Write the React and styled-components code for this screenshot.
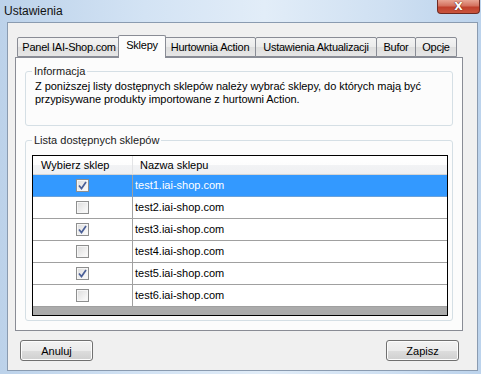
import styled, { createGlobalStyle } from "styled-components";

const GlobalStyle = createGlobalStyle`
  html, body {
    margin: 0;
    padding: 0;
    background: #c9dcf0;
  }
  * {
    box-sizing: border-box;
  }
`;

const Window = styled.div`
  width: 481px;
  height: 374px;
  display: flex;
  flex-direction: column;
  font-family: "Liberation Sans", Arial, sans-serif;
  font-size: 11px;
  color: #000;
  background: linear-gradient(
    to right,
    #bcd2ea 0%,
    #d3e3f4 30%,
    #e2edf8 55%,
    #cfe0f2 80%,
    #bcd3ec 100%
  );
  overflow: hidden;
`;

const TitleBar = styled.div`
  height: 22px;
  display: flex;
  align-items: flex-start;
  padding-left: 4px;
`;

const Title = styled.div`
  flex: 1;
  font-size: 12px;
  line-height: 22px;
  color: #111;
`;

const CloseButton = styled.div`
  width: 43px;
  height: 14px;
  margin-right: 1px;
  border: 1px solid #6e2a22;
  border-top: none;
  border-radius: 0 0 4px 4px;
  background: linear-gradient(to bottom, #e8a493 0%, #d4715e 45%, #c0402c 55%, #c9553e 100%);
  display: flex;
  align-items: center;
  justify-content: center;
  color: #fff;
  font-family: "DejaVu Sans", sans-serif;
  font-weight: bold;
  font-size: 11px;
  line-height: 1;
  text-shadow: 0 0 1px #5a1a12, 0 0 1px #5a1a12;
`;

const Client = styled.div`
  margin: 0 3px 0 7px;
  height: 349px;
  border: 1px solid #8a9bb0;
  background: #f0f0f0;
  display: flex;
  flex-direction: column;
  padding: 12px 14px 9px 7px;
`;

const TabStrip = styled.div`
  height: 22px;
  display: flex;
  align-items: flex-end;
  padding-left: 2px;
  position: relative;
  z-index: 1;
`;

const Tab = styled.div`
  width: ${(p) => p.$w}px;
  height: ${(p) => (p.$active ? 23 : 20)}px;
  margin-bottom: ${(p) => (p.$active ? -1 : 0)}px;
  margin-left: ${(p) => (p.$active ? -2 : 0)}px;
  margin-right: ${(p) => (p.$active ? -2 : -1)}px;
  position: relative;
  z-index: ${(p) => (p.$active ? 2 : 1)};
  border: 1px solid #898c95;
  border-bottom: ${(p) => (p.$active ? "none" : "1px solid #898c95")};
  border-radius: 2px 2px 0 0;
  background: ${(p) =>
    p.$active
      ? "#fcfcfc"
      : "linear-gradient(to bottom, #f3f3f3 0%, #ebebeb 50%, #dedede 51%, #e6e6e6 100%)"};
  display: flex;
  align-items: ${(p) => (p.$active ? "flex-start" : "center")};
  justify-content: center;
  padding-top: ${(p) => (p.$active ? 3 : 0)}px;
  letter-spacing: -0.25px;
  white-space: nowrap;
`;

const Panel = styled.div`
  height: 274px;
  border: 1px solid #898c95;
  background: #fcfcfc;
  padding: 7px 9px 0 9px;
  display: flex;
  flex-direction: column;
`;

const Group = styled.fieldset`
  margin: 0;
  margin-top: ${(p) => p.$mt || 0}px;
  height: ${(p) => p.$h}px;
  border: 1px solid #d5dfe5;
  border-radius: 3px;
  padding: ${(p) => p.$pad};
  min-width: 0;
`;

const Legend = styled.legend`
  padding: 0 2px;
  margin-left: ${(p) => p.$ml || 0}px;
  line-height: 13px;
  color: #1a1a1a;
`;

const InfoText = styled.div`
  line-height: 13px;
  padding-top: 2px;
  letter-spacing: -0.05px;
`;

const Grid = styled.div`
  height: 161px;
  border: 1px solid #000;
  background: #ababab;
  display: grid;
  grid-template-columns: 100px 1fr;
  grid-auto-rows: min-content;
`;

const HeadCell = styled.div`
  height: 19px;
  line-height: 18px;
  padding-left: ${(p) => p.$pl}px;
  background: linear-gradient(to bottom, #ffffff 0%, #fdfdfd 50%, #f2f3f5 51%, #eff0f2 100%);
  border-bottom: 1px solid #d5d5d5;
  border-right: ${(p) => (p.$divider ? "1px solid #e2e3e5" : "none")};
`;

const Cell = styled.div`
  height: 22px;
  line-height: 21px;
  border-bottom: 1px solid ${(p) => (p.$sel ? "#6aa2db" : "#a0a0a0")};
  border-right: ${(p) => (p.$divider ? "1px solid #a0a0a0" : "none")};
  background: ${(p) => (p.$sel ? "#3399ff" : "#fff")};
  color: ${(p) => (p.$sel ? "#fff" : "#000")};
  padding-left: 2px;
  display: flex;
  align-items: center;
  justify-content: ${(p) => (p.$center ? "center" : "flex-start")};
`;

const Check = styled.span`
  width: 13px;
  height: 13px;
  border: 1px solid #8e8f8f;
  background: linear-gradient(135deg, #dcdcdc 0%, #f4f4f4 70%, #fdfdfd 100%);
  box-shadow: inset 0 0 0 1px #f6f6f6;
  display: flex;
  align-items: center;
  justify-content: center;
  margin-left: -2px;
`;

const ButtonRow = styled.div`
  margin-top: auto;
  display: flex;
  justify-content: space-between;
  padding: 0 4px 0 5px;
`;

const Button = styled.button`
  width: 73px;
  height: 21px;
  border: 1px solid #707070;
  border-radius: 3px;
  background: linear-gradient(to bottom, #f2f2f2 0%, #ebebeb 50%, #dddddd 51%, #cfcfcf 100%);
  box-shadow: inset 0 0 0 1px #fcfcfc;
  font-family: "Liberation Sans", Arial, sans-serif;
  font-size: 11px;
  color: #000;
  padding: 0;
`;

const tabs = [
  { label: "Panel IAI-Shop.com", w: 104 },
  { label: "Sklepy", w: 48, active: true },
  { label: "Hurtownia Action", w: 92 },
  { label: "Ustawienia Aktualizacji", w: 122 },
  { label: "Bufor", w: 40 },
  { label: "Opcje", w: 42 },
];

const shops = [
  { name: "test1.iai-shop.com", checked: true, sel: true },
  { name: "test2.iai-shop.com", checked: false },
  { name: "test3.iai-shop.com", checked: true },
  { name: "test4.iai-shop.com", checked: false },
  { name: "test5.iai-shop.com", checked: true },
  { name: "test6.iai-shop.com", checked: false },
];

const Tick = () => (
  <svg width="9" height="9" viewBox="0 0 9 9">
    <path d="M1 4.5 L3.5 7.5 L8 1" fill="none" stroke="#4a5f97" strokeWidth="1.7" />
  </svg>
);

export default function App() {
  return (
    <>
      <GlobalStyle />
      <Window>
        <TitleBar>
          <Title>Ustawienia</Title>
          <CloseButton>X</CloseButton>
        </TitleBar>
        <Client>
          <TabStrip>
            {tabs.map((t) => (
              <Tab key={t.label} $w={t.w} $active={t.active}>
                {t.label}
              </Tab>
            ))}
          </TabStrip>
          <Panel>
            <Group $h={61} $pad="0 8px 0 9px">
              <Legend $ml={-3}>Informacja</Legend>
              <InfoText>
                Z poniższej listy dostępnych sklepów należy wybrać sklepy, do których mają być
                <br />
                przypisywane produkty importowane z hurtowni Action.
              </InfoText>
            </Group>
            <Group $h={187} $mt={8} $pad="8px 4px 3px 6px">
              <Legend>Lista dostępnych sklepów</Legend>
              <Grid>
                <HeadCell $pl={8} $divider>Wybierz sklep</HeadCell>
                <HeadCell $pl={7}>Nazwa sklepu</HeadCell>
                {shops.map((s) => [
                  <Cell key={s.name + "c"} $sel={s.sel} $divider $center>
                    <Check>{s.checked && <Tick />}</Check>
                  </Cell>,
                  <Cell key={s.name} $sel={s.sel}>
                    {s.name}
                  </Cell>,
                ])}
              </Grid>
            </Group>
          </Panel>
          <ButtonRow>
            <Button>Anuluj</Button>
            <Button>Zapisz</Button>
          </ButtonRow>
        </Client>
      </Window>
    </>
  );
}
